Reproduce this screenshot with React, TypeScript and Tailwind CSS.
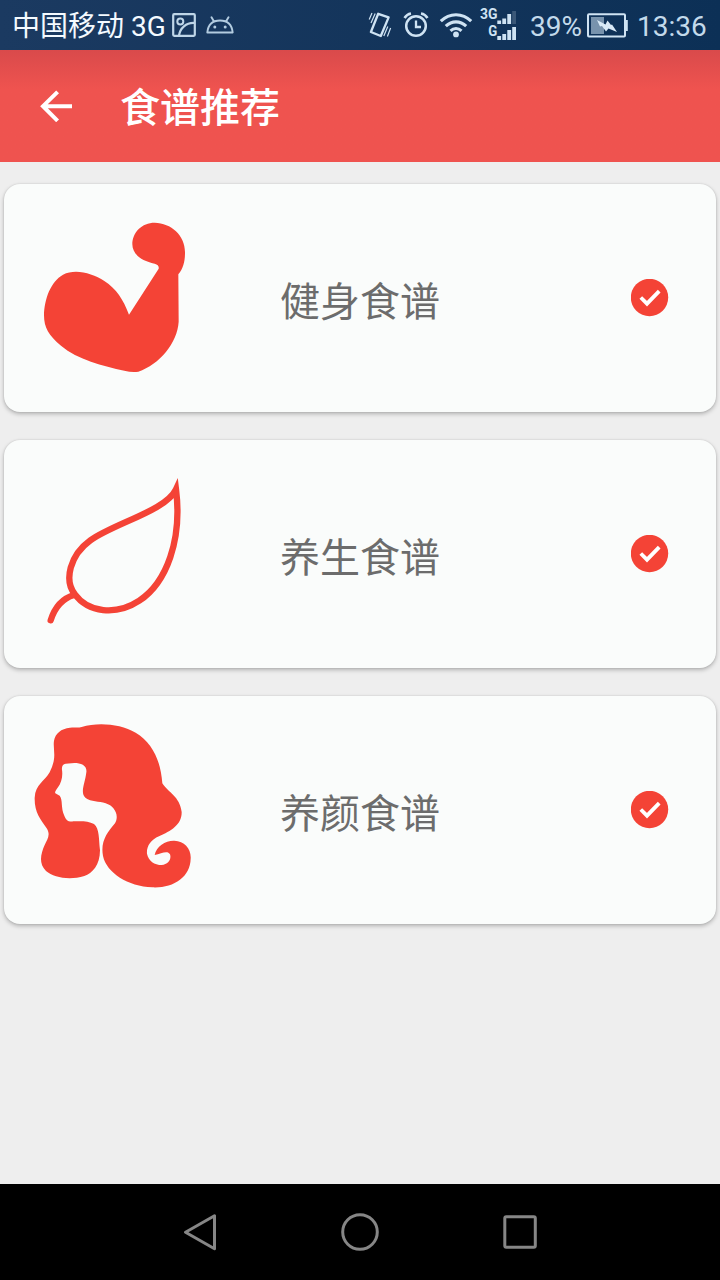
import React from "react";

const STATUS = "#cfe3f3";

function PictureIcon() {
  return (
    <svg className="ml-1.5 h-6 w-6 shrink-0" viewBox="0 0 24 24" fill="none" stroke="#bfd6e8" strokeWidth="2.2">
      <rect x="1.2" y="1.2" width="21.6" height="21.6" rx="1" />
      <circle cx="8.3" cy="8.5" r="3" strokeWidth="2" />
      <path d="M7 22.5c1-7 7-13 15.500-12.500" />
    </svg>
  );
}

function AndroidIcon() {
  return (
    <svg className="ml-2.5 h-[18px] w-7 shrink-0" viewBox="0 0 28 18" fill="none" stroke="#b3cce0" strokeWidth="1.900">
      <path d="M1.300 16.500C2.200 8 7.500 4.500 14 4.500s11.800 3.500 12.700 12zM8 5.500L5.500 1.200M20 5.500l2.500-4.300" strokeLinejoin="round" strokeLinecap="round" />
      <circle cx="8.800" cy="11" r="1.500" fill="#b3cce0" stroke="none" />
      <circle cx="19.200" cy="11" r="1.500" fill="#b3cce0" stroke="none" />
    </svg>
  );
}

function VibrateIcon() {
  return (
    <svg className="h-[26px] w-6 shrink-0" viewBox="0 0 24 26" fill="none" stroke={STATUS} strokeWidth="2.300">
      <path d="M10.200 1.800L20.600 5.400 12.800 24 2.900 20z" strokeLinejoin="round" />
      <path d="M4 1L1.200 7.500M7.200 1.500L3 11M22.600 16l-3.200 8.500M19.800 14.500l-4 9.500" strokeWidth="1.200" />
    </svg>
  );
}

function AlarmIcon() {
  return (
    <svg className="ml-[11px] h-[26px] w-[26px] shrink-0" viewBox="0 0 26 26" fill="none" stroke={STATUS} strokeWidth="2.500">
      <circle cx="13" cy="14" r="9.800" />
      <path d="M13 8.500V15h5" strokeWidth="2.300" />
      <path d="M1.500 6C3 3.500 5 2 8 1.500M24.500 6C23 3.500 21 2 18 1.500" />
    </svg>
  );
}

function WifiIcon() {
  return (
    <svg className="ml-2.5 h-[26px] w-[34px] shrink-0" viewBox="0 0 34 26" fill="none" stroke={STATUS} strokeWidth="3.100">
      <path d="M1.800 9.200C10.500 .5 23.500 .5 32.200 9.200" />
      <path d="M6.800 14.200c6-5.800 14.400-5.800 20.400 0" />
      <path d="M11.500 18.800c3.200-3 7.800-3 11 0" />
      <circle cx="17" cy="22.400" r="2.900" fill={STATUS} stroke="none" />
    </svg>
  );
}

function SignalIcon() {
  return (
    <svg className="ml-[7px] h-[36px] w-[37px] shrink-0" viewBox="0 0 37 36" fill={STATUS}>
      <text x="0" y="11.500" fontFamily="Roboto, sans-serif" fontSize="14" fontWeight="700" textLength="17.500" lengthAdjust="spacingAndGlyphs">3G</text>
      <text x="8.300" y="29" fontFamily="Roboto, sans-serif" fontSize="14" fontWeight="700" textLength="9" lengthAdjust="spacingAndGlyphs">G</text>
      <path d="M17.300 13.500h3.800V17h-3.800zM22.300 11.500h3.800V17h-3.800zM27.300 7h3.800v10h-3.800zM17.300 29h3.800v4h-3.800zM22.300 27h3.800v6h-3.800zM27.300 23h3.800v10h-3.800zM32.200 20H36v13h-3.800z" />
      <path d="M32.200 4H36v13h-3.800z" fill="#3b5878" />
    </svg>
  );
}

function BatteryIcon() {
  return (
    <svg className="ml-[5px] h-[25px] w-[41px] shrink-0" viewBox="0 0 41 25">
      <path d="M4 4h13v17H4z" fill="#7893ad" />
      <rect x="1" y="1.200" width="37" height="22.300" rx="1" fill="none" stroke={STATUS} strokeWidth="2" />
      <path d="M38 7h2.800v11H38z" fill={STATUS} />
      <path d="M10 7l8.500 4.500 2-4 3.500 4.500 1-.5 5 7.500-8.500-3.500-2.500 3-4-5.500-2 .5z" fill="#d9eaf7" />
    </svg>
  );
}

function StatusBar() {
  return (
    <div className="flex h-[50px] shrink-0 items-center justify-between bg-linear-to-r from-[#1b3a61] to-[#0c3056] pr-3 pl-3 text-[28px] leading-none">
      <div className="flex items-center">
        <span className="w-[154px] pt-[4px] whitespace-nowrap text-[#f4faff]">中国移动 3G</span>
        <PictureIcon />
        <AndroidIcon />
      </div>
      <div className="flex items-center text-[#c3daeb]">
        <VibrateIcon />
        <AlarmIcon />
        <WifiIcon />
        <SignalIcon />
        <span className="ml-[13px] w-[52px] pt-[3px] whitespace-nowrap">39%</span>
        <BatteryIcon />
        <span className="ml-[9px] w-[71px] pt-[3px] whitespace-nowrap">13:36</span>
      </div>
    </div>
  );
}

function Header() {
  return (
    <header className="flex h-28 shrink-0 items-center bg-linear-to-b from-[#d94a4b] via-[#ef534f] via-35% to-[#ef534f] pl-10 text-white">
      <svg className="h-8 w-8" viewBox="0 0 32 32" fill="none" stroke="white" strokeWidth="4">
        <path d="M17.600 1.800L3 16.200l14.600 14.600M3 16.200h29" />
      </svg>
      <h1 className="ml-12 pt-[5px] text-[40px] leading-none font-medium">食谱推荐</h1>
    </header>
  );
}

function MuscleIcon() {
  return (
    <svg className="h-[175px] w-[170px]" viewBox="0 0 510 525" fill="#f44336">
      <path d="M297 314L386 176Q388 165 374 161C334 153 307 132 307 103C307 67 336 38 374 38C424 39 466 77 465 128C465 154 460 175 445 193L446 335C442 399 389 463 325 485Q306 488 283 482C219 468 143 449 93 407C56 377 42 352 42 316C43 267 62 215 99 194C137 175 187 190 223 213C259 237 280 268 297 314Z" />
    </svg>
  );
}

function LeafIcon() {
  return (
    <svg className="h-[175px] w-[170px]" viewBox="0 0 510 525" fill="none" stroke="#f44336" strokeWidth="19">
      <path d="M438 73C408 137 255 174 181 226C119 271 102 346 134 387C174 443 258 453 328 407C410 353 457 224 438 73Z" strokeMiterlimit="10" />
      <path d="M132 390C92 402 73 431 62 466" strokeLinecap="round" />
    </svg>
  );
}

function HairIcon() {
  return (
    <svg className="h-[185px] w-[175px]" viewBox="0 0 525 555" fill="#f44336">
      <path
        fillRule="evenodd"
        d="M86 148C91 125 84 105 87 86C91 64 108 50 135 47C150 45 158 48 170 45C218 30 286 35 332 62C383 93 407 146 412 214C430 243 464 252 470 300C471 338 438 357 402 373C377 383 364 404 366 425C370 447 389 459 410 459C430 458 440 441 435 427C428 414 410 424 389 429C394 402 422 385 448 386C479 388 499 410 497 440C496 496 444 529 382 526C309 523 245 483 234 432C226 389 246 362 270 334C284 309 268 282 242 274C222 267 198 270 182 258C164 243 180 215 184 181C187 161 169 153 148 153L122 155Q109 157 111 174C114 193 109 212 99 226Q88 240 91 244L104 251C114 263 107 288 118 311C124 327 132 330 145 328C165 327 190 326 207 336C224 351 221 380 225 415C225 460 202 484 178 492C132 506 86 496 63 477C38 453 50 420 58 401C67 382 77 370 66 350C46 321 28 302 29 257C31 218 60 206 74 181Q82 166 86 148Z"
      />
    </svg>
  );
}

function CheckBadge() {
  return (
    <svg className="h-[38px] w-[38px] shrink-0" viewBox="0 0 38 38">
      <circle cx="18.500" cy="18.500" r="18.700" fill="#f44336" />
      <path d="M9.800 18.500l6.200 6.200L28.200 12.200" fill="none" stroke="white" strokeWidth="3.800" />
    </svg>
  );
}

const recipes = [
  { name: "健身食谱", icon: <MuscleIcon />, place: "pl-[26px] pt-[26px]" },
  { name: "养生食谱", icon: <LeafIcon />, place: "pl-[26px] pt-[25px]" },
  { name: "养颜食谱", icon: <HairIcon />, place: "pl-[21px] pt-4" },
];

function NavBar() {
  return (
    <nav className="flex h-24 shrink-0 items-center justify-center gap-[120px] bg-black">
      <svg className="h-10 w-10" viewBox="0 0 40 40" fill="none" stroke="#868686" strokeWidth="3" strokeLinejoin="round">
        <path d="M34.500 3.800v33L5.500 20.200z" />
      </svg>
      <svg className="h-10 w-10" viewBox="0 0 40 40" fill="none" stroke="#868686" strokeWidth="3">
        <circle cx="20" cy="20" r="17.300" />
      </svg>
      <svg className="h-10 w-10" viewBox="0 0 40 40" fill="none" stroke="#868686" strokeWidth="3">
        <rect x="4.800" y="4.700" width="30.500" height="30.500" rx="1.500" />
      </svg>
    </nav>
  );
}

export default function App() {
  return (
    <div className="flex h-[1280px] w-[720px] flex-col overflow-hidden bg-[#eeeeee] font-['Roboto','Noto_Sans_CJK_SC',sans-serif]">
      <StatusBar />
      <Header />
      <main className="flex flex-1 flex-col gap-7 px-1 pt-[22px]">
        {recipes.map((recipe) => (
          <section
            key={recipe.name}
            className="flex h-[228px] items-center rounded-[16px] bg-[#fafcfb] pr-[47px] shadow-[0_2px_4px_rgba(0,0,0,0.25),0_0_2px_rgba(0,0,0,0.12)]"
          >
            <div className={`h-full w-[276px] shrink-0 ${recipe.place}`}>{recipe.icon}</div>
            <h2 className="flex-1 pt-[9px] text-[40px] leading-none font-normal text-[#6c6c6c]">{recipe.name}</h2>
            <CheckBadge />
          </section>
        ))}
      </main>
      <NavBar />
    </div>
  );
}
